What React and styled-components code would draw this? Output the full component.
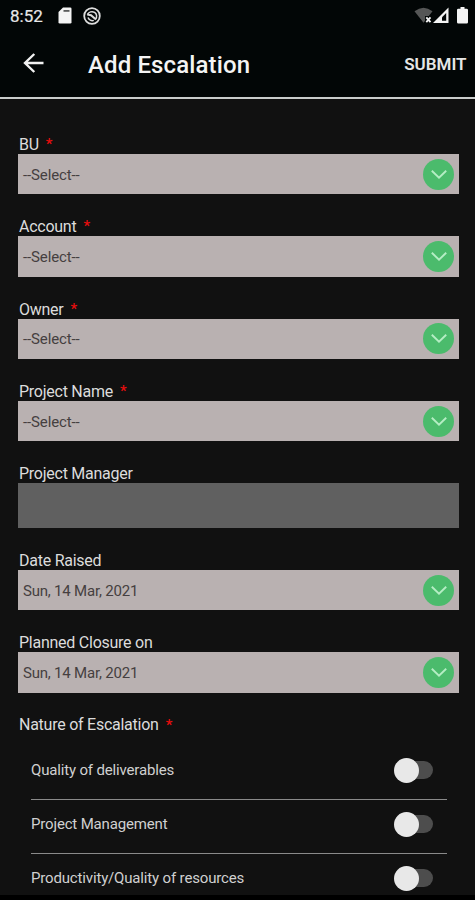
import { useState } from "react";
import styled, { createGlobalStyle } from "styled-components";

const fields = [
  { label: "BU", value: "--Select--", required: true },
  { label: "Account", value: "--Select--", required: true },
  { label: "Owner", value: "--Select--", required: true },
  { label: "Project Name", value: "--Select--", required: true },
  { label: "Project Manager", readOnly: true },
  { label: "Date Raised", value: "Sun, 14 Mar, 2021" },
  { label: "Planned Closure on", value: "Sun, 14 Mar, 2021" },
];

const natures = [
  "Quality of deliverables",
  "Project Management",
  "Productivity/Quality of resources",
];

function SelectField({ label, value, required, readOnly }) {
  return (
    <StyledField>
      <StyledLabel>
        {label}
        {required && <RequiredStar>*</RequiredStar>}
      </StyledLabel>
      {readOnly ? (
        <ReadOnlyBox />
      ) : (
        <SelectBox type="button">
          <SelectValue $dashed={value.startsWith("--")}>{value}</SelectValue>
          <RoundIcon>
            <svg width="16" height="9" viewBox="0 0 16 9" fill="none">
              <path d="M0.8 0.8L8 7.6L15.2 0.8" stroke="#b5edc4" strokeWidth="1.9" />
            </svg>
          </RoundIcon>
        </SelectBox>
      )}
    </StyledField>
  );
}

function NatureRow({ label }) {
  const [checked, setChecked] = useState(false);

  return (
    <StyledRow>
      <span>{label}</span>
      <Switch
        type="button"
        role="switch"
        aria-label={label}
        aria-checked={checked}
        $checked={checked}
        onClick={() => setChecked(!checked)}
      >
        <SwitchThumb />
      </Switch>
    </StyledRow>
  );
}

function StatusBar() {
  return (
    <StyledStatusBar>
      <Clock>8:52</Clock>
      <svg width="14" height="17" viewBox="0 0 14 17">
        <path
          d="M5 0.5H12.2Q13.5 0.5 13.5 1.8V15.2Q13.5 16.5 12.2 16.5H1.8Q0.5 16.5 0.5 15.2V5Z"
          fill="#f4f4f4"
        />
        <path d="M5.5 3H11.5V4.8H5.5Z" fill="#5a5c5c" />
      </svg>
      <RingIcon width="18" height="18" viewBox="0 0 18 18" fill="none">
        <circle cx="9" cy="9" r="7.8" stroke="#dedede" strokeWidth="1.8" />
        <path
          d="M4.4 7.6C5.6 4.9 9 3.8 11.6 5.4C14 7 14.2 10 12.6 12"
          stroke="#dedede"
          strokeWidth="1.5"
        />
        <path
          d="M5 10.4C5.8 12.8 8.4 14.2 10.8 13.4"
          stroke="#dedede"
          strokeWidth="1.5"
        />
        <path
          d="M4.3 7.4L8 8.2L13 12.6"
          stroke="#dedede"
          strokeWidth="2"
        />
      </RingIcon>
      <SystemIcons>
        <svg width="19" height="17" viewBox="0 0 19 17">
          <path d="M0.5 4.2Q9.5 -2.8 18.5 4.2L9.5 15.8Z" fill="#555656" />
          <path d="M11 9H19V17H11Z" fill="#020606" />
          <path
            d="M12.3 10.3L16.5 15.2M16.5 10.3L12.3 15.2"
            stroke="#f4f4f4"
            strokeWidth="1.8"
          />
        </svg>
        <svg width="16" height="17" viewBox="0 0 16 17">
          <path d="M15.5 0.5V16H0Z" fill="#f4f4f4" />
          <path d="M13.2 6V13.7H9V10.2Z" fill="#020606" />
        </svg>
        <Battery width="11" height="17" viewBox="0 0 11 17">
          <path
            d="M3.5 0H7.5V1.7H9.6Q11 1.7 11 3.1V15.2Q11 16.6 9.6 16.6H1.4Q0 16.6 0 15.2V3.1Q0 1.7 1.4 1.7H3.5Z"
            fill="#f4f4f4"
          />
        </Battery>
      </SystemIcons>
    </StyledStatusBar>
  );
}

export default function App() {
  return (
    <Screen>
      <GlobalStyle />
      <StyledHeader>
        <StatusBar />
        <Toolbar>
          <BackButton type="button" aria-label="Back">
            <svg width="21" height="20" viewBox="0 0 21 20" fill="none">
              <path
                d="M20.5 10H2M11.3 1L2 10L11.3 19"
                stroke="#f1f1f1"
                strokeWidth="2.4"
              />
            </svg>
          </BackButton>
          <Title>Add Escalation</Title>
          <SubmitButton type="submit">SUBMIT</SubmitButton>
        </Toolbar>
      </StyledHeader>
      <StyledForm>
        {fields.map((field) => (
          <SelectField key={field.label} {...field} />
        ))}
        <GroupLabel>
          Nature of Escalation
          <RequiredStar>*</RequiredStar>
        </GroupLabel>
        <NatureList>
          {natures.map((nature) => (
            <NatureRow key={nature} label={nature} />
          ))}
        </NatureList>
      </StyledForm>
      <BottomEdge />
    </Screen>
  );
}

const GlobalStyle = createGlobalStyle`
  * {
    box-sizing: border-box;
  }

  body {
    margin: 0;
    background-color: #111111;
    font-family: Roboto, "Liberation Sans", sans-serif;
  }

  button {
    padding: 0;
    border: none;
    background: none;
    font-family: inherit;
  }

  svg {
    display: block;
    flex-shrink: 0;
  }
`;

const Screen = styled.main`
  display: flex;
  flex-direction: column;
  width: 475px;
  height: 900px;
  overflow: hidden;
  background-color: #111111;
`;

const StyledHeader = styled.header`
  flex-shrink: 0;
  height: 99px;
  border-bottom: 2px solid #c9cccb;
  background-color: #020606;
`;

const StyledStatusBar = styled.div`
  display: flex;
  align-items: center;
  height: 31px;
  padding: 0 7px 0 10px;
`;

const Clock = styled.span`
  width: 48px;
  color: #e8e8e8;
  font-size: 17px;
  -webkit-text-stroke: 0.2px #e8e8e8;
`;

const RingIcon = styled.svg`
  margin-left: 11px;
`;

const SystemIcons = styled.div`
  display: flex;
  align-items: center;
  margin-left: auto;
`;

const Battery = styled.svg`
  margin-left: 8px;
`;

const Toolbar = styled.div`
  display: flex;
  align-items: center;
  height: 66px;
  padding: 0 8.5px 0 23px;
`;

const BackButton = styled.button`
  width: 65px;
  padding-bottom: 2px;
`;

const Title = styled.h1`
  margin: 0;
  padding-top: 2px;
  color: #f4f4f4;
  font-size: 24px;
  font-weight: 500;
  letter-spacing: 0.12px;
  white-space: nowrap;
`;

const SubmitButton = styled.button`
  margin-left: auto;
  color: #e6e6e6;
  font-size: 17px;
  font-weight: 600;
`;

const StyledForm = styled.form`
  flex: 1;
  min-height: 0;
  padding: 35px 15.7px 0 18.3px;
  overflow: hidden;
`;

const StyledField = styled.div`
  margin-bottom: 22px;
`;

const StyledLabel = styled.div`
  display: flex;
  height: 20px;
  padding-left: 0.7px;
  color: #dcdcdc;
  font-size: 16px;
  letter-spacing: -0.25px;
  line-height: 21px;
  white-space: nowrap;
`;

const GroupLabel = styled(StyledLabel)`
  line-height: 20px;
`;

const RequiredStar = styled.span`
  margin-left: 7px;
  color: #e80d0d;
  font-size: 15px;
  font-weight: 500;
  line-height: 20px;
`;

const SelectBox = styled.button`
  display: flex;
  align-items: center;
  justify-content: space-between;
  width: 100%;
  height: 40.3px;
  padding: 0 5px 0 4.7px;
  background-color: #b9b1b1;
`;

const SelectValue = styled.span`
  padding-top: 1px;
  color: #453f40;
  font-size: 15px;
  letter-spacing: ${({ $dashed }) => ($dashed ? "-0.12px" : "-0.2px")};
`;

const RoundIcon = styled.span`
  display: flex;
  align-items: center;
  justify-content: center;
  width: 31px;
  height: 31px;
  border-radius: 50%;
  background-color: #4bbb6c;
`;

const ReadOnlyBox = styled.div`
  height: 44.8px;
  background-color: #606060;
`;

const NatureList = styled.div`
  padding: 11px 12px 0 12.7px;
`;

const StyledRow = styled.div`
  display: flex;
  align-items: center;
  justify-content: space-between;
  height: 54px;
  padding: 0 14px 4px 0;
  border-bottom: 1px solid #8a8a8a;
  color: #d0d0d0;
  font-size: 15px;
  letter-spacing: -0.16px;
`;

const Switch = styled.button`
  display: flex;
  align-items: center;
  justify-content: ${({ $checked }) => ($checked ? "flex-end" : "flex-start")};
  width: 34px;
  height: 18px;
  border-radius: 9px;
  background-color: ${({ $checked }) => ($checked ? "#2f7d47" : "#4d4d4d")};
`;

const SwitchThumb = styled.span`
  flex-shrink: 0;
  width: 25px;
  height: 25px;
  margin: 0 -5px;
  border-radius: 50%;
  background-color: #e8e8e8;
`;

const BottomEdge = styled.div`
  flex-shrink: 0;
  height: 5px;
  background-color: #000000;
`;
